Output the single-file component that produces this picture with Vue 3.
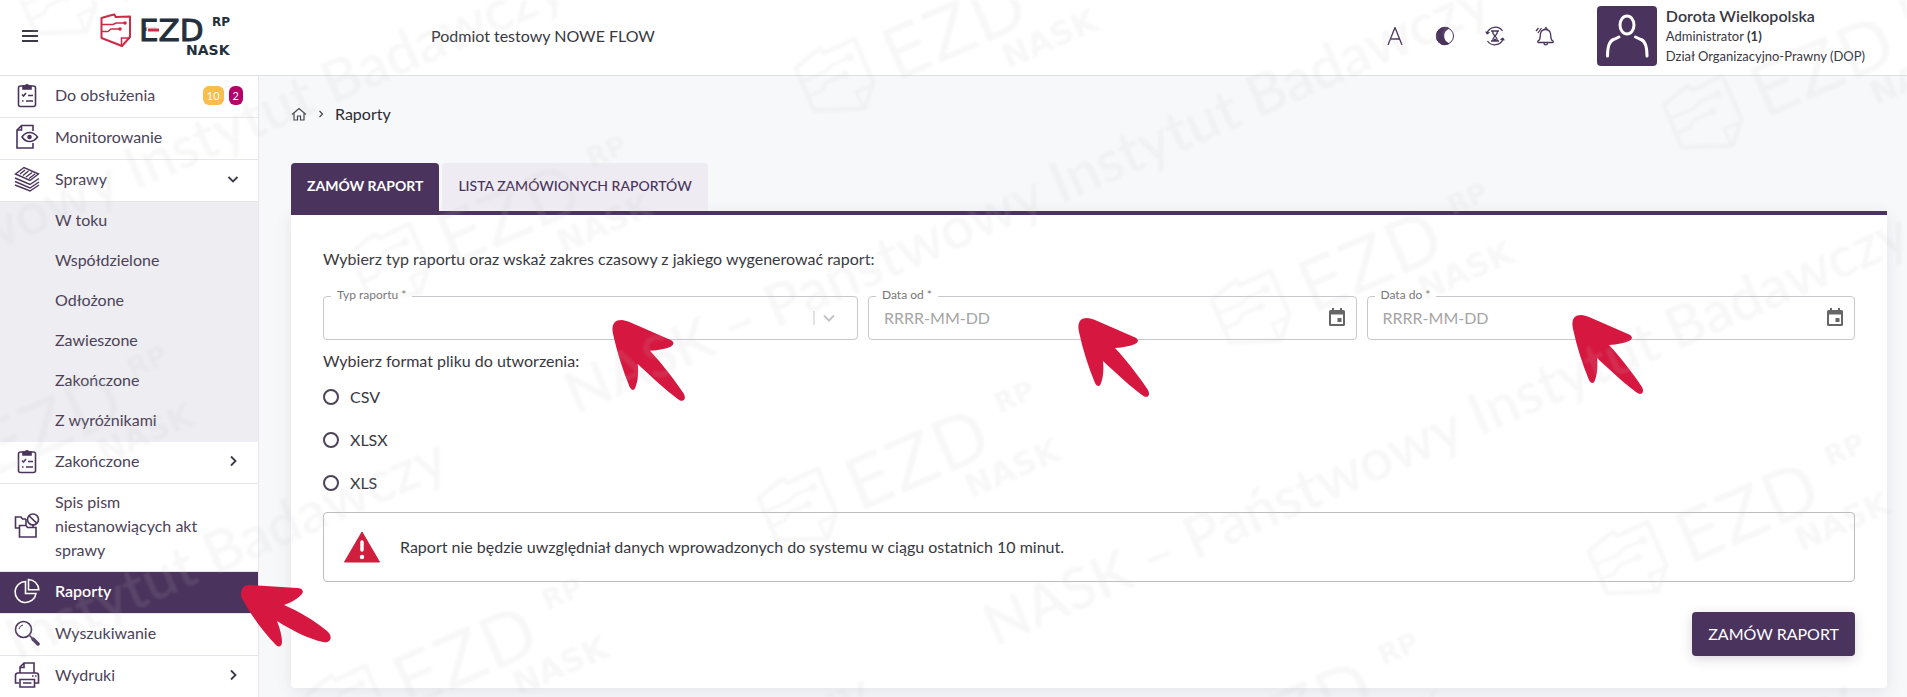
<script setup>
import { ref } from 'vue'

const menu = [
  { id: 'todo', label: 'Do obsłużenia', icon: 'clipboard', badges: [{ text: '10', type: 'warn' }, { text: '2', type: 'new' }] },
  { id: 'monitoring', label: 'Monitorowanie', icon: 'monitor' },
  {
    id: 'cases',
    label: 'Sprawy',
    icon: 'stack',
    arrow: 'down',
    children: ['W toku', 'Współdzielone', 'Odłożone', 'Zawieszone', 'Zakończone', 'Z wyróżnikami']
  },
  { id: 'closed', label: 'Zakończone', icon: 'clipboard', arrow: 'right' },
  { id: 'letters', label: 'Spis pism niestanowiących akt sprawy', icon: 'folders' },
  { id: 'reports', label: 'Raporty', icon: 'chart' },
  { id: 'search', label: 'Wyszukiwanie', icon: 'search' },
  { id: 'prints', label: 'Wydruki', icon: 'printer', arrow: 'right' }
]

const formats = ['CSV', 'XLSX', 'XLS']
const dates = [
  { id: 'date-from', label: 'Data od *' },
  { id: 'date-to', label: 'Data do *' }
]

const active = ref('reports')
const tab = ref('order')
const reportType = ref('')
const range = ref({ 'date-from': '', 'date-to': '' })
const format = ref('')

// Background watermark: logo and text positions
const markLogos = [
  [10, -18], [788, 59], [1656, 96], [343, 244], [1204, 291],
  [-116, 454], [751, 489], [1581, 542], [299, 686], [1135, 741]
]
const markTexts = [
  [-349, 401], [576, 415], [995, 647], [-467, 872], [-43, 1106], [940, 1112]
]
</script>

<template>
  <div class="app">
    <!-- shared shapes -->
    <svg class="defs" aria-hidden="true">
      <symbol id="poland" viewBox="0 0 32 34">
        <path d="M1.5 5 10 2.5l4.5-1 1 2.500L30 3.500V24l-8 9L1.500 25Z" fill="none" stroke="currentColor" stroke-width="2" stroke-linejoin="round" />
        <path d="M21.500 32.500V25H30M2 11.500h11l3-1.500h8M2 18.500h6l3-2.500h8" fill="none" stroke="currentColor" stroke-width="1.500" />
        <circle cx="25" cy="10" r="1.800" fill="currentColor" /><circle cx="20" cy="16" r="1.800" fill="currentColor" />
      </symbol>
      <symbol id="pointer" viewBox="0 0 74 80">
        <path d="M1 14C-1 5 2 0 9 0c3 0 5 1 8 2l39 17c5 2 5 5 1 7q-7 3-20 4c13 14 25 30 33 42 3 6-1 9-6 5-11-8-24-20-39-34 1 9 0 17-2 22-1 4-4 4-6 0C10 48 5 32 1 14Z" fill="#d6173f" />
      </symbol>
    </svg>

    <header class="topbar">
      <button class="icon-btn burger" aria-label="Menu">
        <svg width="18" height="14" viewBox="0 0 18 14"><path d="M1 2h16M1 7h16M1 12h16" stroke="#3b3b45" stroke-width="2" /></svg>
      </button>
      <a href="#" class="logo" aria-label="EZD RP">
        <svg width="134" height="46" viewBox="0 0 134 46">
          <use href="#poland" width="32" height="34" color="#cf2945" />
          <text x="39" y="28" class="logo-ezd">EZD</text>
          <path d="M46.500 17h14" stroke="#fff" stroke-width="5.500" />
          <path d="M48 17h11" stroke="#cf2945" stroke-width="3" />
          <text x="112" y="13" class="logo-rp">RP</text>
          <text x="86" y="42" class="logo-nask">NASK</text>
        </svg>
      </a>
      <span class="entity">Podmiot testowy NOWE FLOW</span>

      <div class="tools">
        <button class="icon-btn" aria-label="Rozmiar tekstu">
          <svg width="20" height="20" viewBox="0 0 20 20"><path d="M3 19 10 1.500 17 19M5.500 13h9" /></svg>
        </button>
        <button class="icon-btn" aria-label="Kontrast">
          <svg width="20" height="20" viewBox="0 0 20 20">
            <circle cx="10" cy="10" r="8.500" stroke-width="1" />
            <path d="M10 1.500a8.500 8.500 0 0 0 0 17c2 0 3-.6 3.500-1C10 16 8.500 13.500 8.500 10S10 4 13.500 2.500c-.5-.4-1.500-1-3.500-1Z" fill="#4a335c" />
          </svg>
        </button>
        <button class="icon-btn" aria-label="Sesja">
          <svg width="20" height="20" viewBox="0 0 20 20">
            <path d="M2 7A8.800 8.800 0 0 1 17.500 5M18 13A8.800 8.800 0 0 1 2.500 15M.8 5.500l1.400 2.300 2.300-1.600M19.200 14.500l-1.400-2.300-2.300 1.600M6 5h8M6 15h8M7.500 5c0 3 1.500 4 2.500 5-1 1-2.500 2-2.500 5M12.500 5c0 3-1.500 4-2.500 5 1 1 2.500 2 2.500 5M8.800 13.500h2.400" />
          </svg>
        </button>
        <button class="icon-btn" aria-label="Powiadomienia">
          <svg width="20" height="20" viewBox="0 0 20 20">
            <path d="M3.500 16.500c-1 0-1-1.500 0-1.800 2-.8 1.500-4 2-7C6 5 8 3.500 10.500 3.500S15 5 15.500 7.700c.5 3 0 6.200 2 7 1 .3 1 1.800 0 1.800ZM9 17c0 2.500 3.500 2.500 3.500 0M10 3.300c0-2.300 2-2.300 2 .2M1 5l2.500-3M3 7l3.500-5" />
          </svg>
        </button>
      </div>

      <div class="user">
        <svg class="avatar" width="60" height="60" viewBox="0 0 60 60">
          <rect width="60" height="60" rx="4" fill="#4a335c" />
          <g fill="none" stroke="#fff" stroke-width="3" stroke-linecap="round">
            <ellipse cx="30" cy="19" rx="7" ry="9" />
            <path d="M10.500 50c0-10 2-15 6-16.500L22 31M50 50c0-10-2-15-6-16.500L38.500 31" />
          </g>
        </svg>
        <div class="user-data">
          <div class="user-name">Dorota Wielkopolska</div>
          <div>Administrator <b>(1)</b></div>
          <div>Dział Organizacyjno-Prawny (DOP)</div>
        </div>
      </div>
    </header>

    <div class="body">
      <nav class="sidebar">
        <template v-for="item in menu" :key="item.id">
          <a href="#" class="item" :class="{ active: item.id === active }" @click.prevent="active = item.id">
            <svg class="item-icon" width="26" height="26" viewBox="0 0 26 26">
              <g v-if="item.icon === 'clipboard'">
                <rect x="4.500" y="4" width="17" height="20.500" rx="2" />
                <path d="M9 7V4h2.200a1.900 1.900 0 0 1 3.600 0H17v3Z" fill="#4a335c" />
                <path d="m8 12.500 1.500 1.500 2.500-3M14 13.500h5M8 19h1.500M12 19h7" />
              </g>
              <g v-else-if="item.icon === 'monitor'">
                <path d="M19 7V1.500H7.500L3 6v18h16v-5M7.500 1.500V6H3" />
                <path d="M8 13c4-6 11-6 15.500 0-4.500 6-11.500 6-15.500 0Z" />
                <circle cx="15.500" cy="13" r="1.500" fill="#4a335c" />
              </g>
              <g v-else-if="item.icon === 'stack'">
                <path d="M1.500 8 10 1.500 24.500 8 16 14.500ZM1 12l15 6.500 9-6M1 15.500 16 22l9-6M1 19l15 6 9-6M6 8l5-4M9 9.500l5.500-4.500M12 11l6-4.500M15 12.500l6-4.500" stroke-width="1.400" />
              </g>
              <g v-else-if="item.icon === 'folders'">
                <path d="M5 15H1.500V4H7l1.500 2H12M5.500 24V12.500H12l1.500 2H22V24ZM12 6v6M19 14v-3" />
                <circle cx="19" cy="6.500" r="5.500" /><path d="m15.200 3 7.500 7.200" />
              </g>
              <g v-else-if="item.icon === 'chart'">
                <path d="M11.500 3.500a10.500 10.500 0 1 0 10.500 12H11.500ZM14.500 1.500v10.300h10.300C24.500 6 20 1.700 14.500 1.500Z" />
              </g>
              <g v-else-if="item.icon === 'search'">
                <circle cx="9.500" cy="9.500" r="8" /><path d="M5 9a5 5 0 0 1 4-4" stroke-width="1" />
                <path d="m15.500 15.500 3 3" /><path d="m19 19 5 5" stroke-width="3.500" stroke-linecap="round" />
              </g>
              <g v-else>
                <path d="M6 11V5l4-4h10v10M10 1v4.500H6M5 21H1.500v-7.500Q1.500 11 4 11h18q2.500 0 2.500 2.500V21H21M6 17.500h14.500V25H6ZM9 21h8.500" />
                <path d="M18 14h1.500M21 14h1.500" />
              </g>
            </svg>
            <span class="item-label">{{ item.label }}</span>
            <span v-if="item.badges" class="badges">
              <span v-for="badge in item.badges" :key="badge.text" :class="['badge', 'badge-' + badge.type]">{{ badge.text }}</span>
            </span>
            <svg v-if="item.arrow" class="arrow" width="12" height="12" viewBox="0 0 12 12">
              <path :d="item.arrow === 'down' ? 'm1.500 4 4.500 4.500L10.500 4' : 'm4 1.500 4.500 4.500L4 10.500'" />
            </svg>
          </a>
          <div v-if="item.children" class="submenu">
            <a v-for="child in item.children" :key="child" href="#" class="subitem">{{ child }}</a>
          </div>
        </template>
      </nav>

      <main class="content">
        <div class="breadcrumbs">
          <a href="#" aria-label="Start">
            <svg width="16" height="14" viewBox="0 0 16 14"><path d="M1 7.500 8 1.500l7 6M3 6.500V13h3.500V9h3v4H13V6.500" /></svg>
          </a>
          <svg width="6" height="8" viewBox="0 0 6 8"><path d="m1.500 1 3 3-3 3" /></svg>
          <span>Raporty</span>
        </div>

        <div class="tabs">
          <button class="tab" :class="{ selected: tab === 'order' }" @click="tab = 'order'">ZAMÓW RAPORT</button>
          <button class="tab" :class="{ selected: tab === 'list' }" @click="tab = 'list'">LISTA ZAMÓWIONYCH RAPORTÓW</button>
        </div>

        <form class="card" @submit.prevent>
          <p class="lead">Wybierz typ raportu oraz wskaż zakres czasowy z jakiego wygenerować raport:</p>
          <div class="fields">
            <div class="field">
              <label for="report-type">Typ raportu *</label>
              <select id="report-type" v-model="reportType">
                <option value=""></option>
              </select>
              <svg class="select-arrow" width="24" height="16" viewBox="0 0 24 16"><path d="M1 1v14" stroke-width="1" /><path d="m11 5.500 5 5 5-5" /></svg>
              <svg class="pointer pointer-type" width="76" height="82"><use href="#pointer" /></svg>
            </div>
            <div v-for="date in dates" :key="date.id" class="field">
              <label :for="date.id">{{ date.label }}</label>
              <input :id="date.id" v-model="range[date.id]" type="text" placeholder="RRRR-MM-DD">
              <button type="button" class="icon-btn calendar" aria-label="Kalendarz">
                <svg width="16" height="18" viewBox="0 0 16 18">
                  <path d="M3 0h2v2h6V0h2v2h1.500Q16 2 16 3.500v13q0 1.500-1.500 1.500h-13Q0 18 0 16.500v-13Q0 2 1.500 2H3ZM2 6.500V16h12V6.500ZM8.500 10h4v4h-4Z" fill="#666" fill-rule="evenodd" />
                </svg>
              </button>
              <svg :class="['pointer', 'pointer-' + date.id]" width="74" height="80"><use href="#pointer" /></svg>
            </div>
          </div>

          <fieldset class="formats">
            <legend>Wybierz format pliku do utworzenia:</legend>
            <label v-for="name in formats" :key="name" class="radio">
              <input v-model="format" type="radio" name="format" :value="name">
              {{ name }}
            </label>
          </fieldset>

          <div class="notice">
            <svg width="36" height="32" viewBox="0 0 36 32">
              <path d="M18 1 35.500 31H.5Z" fill="#d01f3c" stroke="#d01f3c" stroke-linejoin="round" />
              <path d="M18 11v8" stroke="#fff" stroke-width="3.500" stroke-linecap="round" /><circle cx="18" cy="26" r="2.200" fill="#fff" />
            </svg>
            <span>Raport nie będzie uwzględniał danych wprowadzonych do systemu w ciągu ostatnich 10 minut.</span>
          </div>

          <div class="actions">
            <button type="submit" class="btn-primary">ZAMÓW RAPORT</button>
          </div>
        </form>
      </main>

      <svg class="menu-pointer" width="90" height="62" viewBox="0 0 90 62">
        <path d="M0 10C0 3 3 0 8 0l48 3c6 0 8 4 3 8q-5 5-16 9c14 6 30 15 43 26 7 6 3 13-4 11-14-3-30-11-46-21 3 8 5 15 5 21 0 5-4 6-7 2C21 45 10 30 2 15Q0 13 0 10Z" fill="#d6173f" />
      </svg>
    </div>

    <svg class="watermark" aria-hidden="true">
      <g v-for="[x, y] in markLogos" :key="'l' + x" :transform="`translate(${x} ${y}) rotate(-23.5) scale(2.3)`">
        <use href="#poland" width="32" height="34" />
        <text x="39" y="28" class="logo-ezd">EZD</text>
        <text x="112" y="13" class="logo-rp">RP</text>
        <text x="86" y="42" class="logo-nask">NASK</text>
      </g>
      <text v-for="[x, y] in markTexts" :key="'t' + x" class="mark-text" :transform="`translate(${x} ${y}) rotate(-23.5)`">NASK – Państwowy Instytut Badawczy</text>
    </svg>
  </div>
</template>

<style>
body {
  margin: 0;
  background: #f7f8fa;
}
</style>

<style scoped>
.app {
  position: relative;
  display: flex;
  flex-direction: column;
  height: 100vh;
  overflow: hidden;
  font-family: 'Lato', 'Open Sans', sans-serif;
  font-size: 16px;
  line-height: 24px;
  color: #38383f;
}

.app * {
  box-sizing: border-box;
}

a {
  color: inherit;
  text-decoration: none;
}

button {
  font: inherit;
  border: 0;
  cursor: pointer;
}

.defs {
  position: absolute;
  width: 0;
  height: 0;
}

.icon-btn {
  display: flex;
  padding: 0;
  background: none;
}

/* Top bar */
.topbar {
  display: flex;
  align-items: center;
  flex: none;
  height: 76px;
  padding: 0 42px 3px 21px;
  background: #fff;
  border-bottom: 1px solid #e0e0e4;
}

.logo {
  display: flex;
  margin-left: 61px;
}

.logo-ezd {
  font: 31px 'DejaVu Sans', sans-serif;
  fill: #232f3a;
  stroke: #232f3a;
  stroke-width: 1px;
}

.logo-rp {
  font: bold 12px 'DejaVu Sans', sans-serif;
  fill: #232f3a;
}

.logo-nask {
  font: bold 14px 'DejaVu Sans', sans-serif;
  fill: #232f3a;
}

.entity {
  margin-left: 197px;
}

.tools {
  display: flex;
  gap: 30px;
  margin-left: auto;
}

.tools svg {
  fill: none;
  stroke: #4a335c;
  stroke-width: 1.3;
  stroke-linejoin: round;
}

.user {
  display: flex;
  gap: 9px;
  margin-left: 42px;
}

.user-data {
  font-size: 13px;
  line-height: 20px;
}

.user-name {
  font-size: 16px;
  font-weight: 600;
}

/* Sidebar */
.body {
  position: relative;
  display: flex;
  flex: 1;
  min-height: 0;
}

.sidebar {
  flex: none;
  width: 259px;
  overflow: hidden;
  background: #fff;
  border-right: 1px solid #e6e6ec;
  color: #4b4358;
}

.item {
  display: flex;
  align-items: center;
  min-height: 42px;
  padding: 6px 15px 9px 14px;
  border-bottom: 1px solid #e6e6ea;
}

.item.active {
  background: #4a335c;
  color: #fff;
  font-weight: 600;
}

.item-icon {
  flex: none;
  margin-right: 15px;
  fill: none;
  stroke: #4a335c;
  stroke-width: 1.6;
}

.item.active .item-icon {
  stroke: #fff;
}

.item-label {
  flex: 1;
  max-width: 160px;
}

.badges {
  display: flex;
  gap: 5px;
  margin-left: auto;
}

.badge {
  padding: 0 4px;
  border-radius: 6px;
  font-size: 11px;
  line-height: 19px;
  color: #fff;
}

.badge-warn {
  background: #f7bd4d;
}

.badge-new {
  background: #b5006c;
}

.arrow {
  margin: 0 4px 0 auto;
  fill: none;
  stroke: #3f3a4a;
  stroke-width: 1.8;
}

.submenu {
  background: #eeedf2;
}

.subitem {
  display: block;
  height: 40px;
  padding: 6px 0 0 55px;
}

.menu-pointer {
  position: absolute;
  left: 241px;
  top: 509px;
}

/* Content */
.content {
  flex: 1;
  padding: 26px 20px 9px 32px;
}

.breadcrumbs {
  display: flex;
  align-items: center;
  gap: 11px;
  margin-bottom: 37px;
  color: #2b2b30;
}

.breadcrumbs a {
  display: flex;
}

.breadcrumbs svg {
  fill: none;
  stroke: #44444c;
  stroke-width: 1.2;
}

.tabs {
  display: flex;
  gap: 3px;
}

.tab {
  height: 48px;
  padding: 0 16px 2px;
  border-radius: 4px 4px 0 0;
  background: #eeecf2;
  color: #4a335c;
  font-size: 14px;
  font-weight: 500;
}

.tab.selected {
  background: #4a335c;
  color: #fff;
  font-weight: 700;
}

.card {
  padding: 32px;
  border-top: 4px solid #4a335c;
  border-radius: 0 0 4px 4px;
  background: #fff;
  box-shadow: 0 4px 16px rgba(50, 60, 80, 0.1);
}

.lead {
  margin: 0 0 25px;
}

.fields {
  display: grid;
  grid-template-columns: 23fr 21fr 21fr;
  gap: 10px;
}

.field {
  position: relative;
}

.field label {
  position: absolute;
  top: -9px;
  left: 8px;
  padding: 0 6px;
  background: #fff;
  font-size: 12px;
  line-height: 16px;
  color: #777;
}

.field input,
.field select {
  display: block;
  width: 100%;
  height: 44px;
  padding: 0 15px 2px;
  border: 1px solid #c8c8cc;
  border-radius: 4px;
  background: #fff;
  appearance: none;
  font: inherit;
  color: inherit;
}

.field input::placeholder {
  color: #a5a5a5;
}

.select-arrow {
  position: absolute;
  right: 21px;
  top: 14px;
  fill: none;
  stroke: #c4c4c8;
  stroke-width: 2;
  pointer-events: none;
}

.calendar {
  position: absolute;
  right: 12px;
  top: 12px;
}

.pointer {
  position: absolute;
  z-index: 1;
  pointer-events: none;
}

.pointer-type {
  left: 54%;
  top: 24px;
}

.pointer-date-from {
  left: 43%;
  top: 22px;
}

.pointer-date-to {
  left: 42%;
  top: 19px;
}

.formats {
  display: flex;
  flex-direction: column;
  gap: 19px;
  margin: 9px 0 17px;
  padding: 0;
  border: 0;
}

.formats legend {
  padding: 0;
  margin-bottom: 12px;
}

.radio {
  display: flex;
  align-items: center;
  gap: 11px;
}

.radio input {
  width: 16px;
  height: 16px;
  margin: 0;
  border: 2px solid #4b4358;
  border-radius: 50%;
  appearance: none;
}

.radio input:checked {
  border-width: 5px;
}

.notice {
  display: flex;
  align-items: center;
  gap: 20px;
  height: 70px;
  padding: 0 20px;
  border: 1px solid #bdbdc0;
  border-radius: 4px;
}

.actions {
  display: flex;
  justify-content: flex-end;
  margin-top: 30px;
}

.btn-primary {
  height: 44px;
  padding: 0 16px;
  border-radius: 4px;
  background: #4a335c;
  color: #fff;
  box-shadow: 0 3px 12px rgba(74, 51, 92, 0.2);
}

/* Watermark */
.watermark {
  position: absolute;
  inset: 0;
  z-index: 2;
  width: 100%;
  height: 100%;
  opacity: 0.12;
  color: #c4c4c4;
  filter: blur(1px);
  pointer-events: none;
}

.watermark text {
  fill: #c4c4c4;
  stroke: none;
}

.watermark .mark-text {
  font: 600 58px 'Lato', sans-serif;
}
</style>
